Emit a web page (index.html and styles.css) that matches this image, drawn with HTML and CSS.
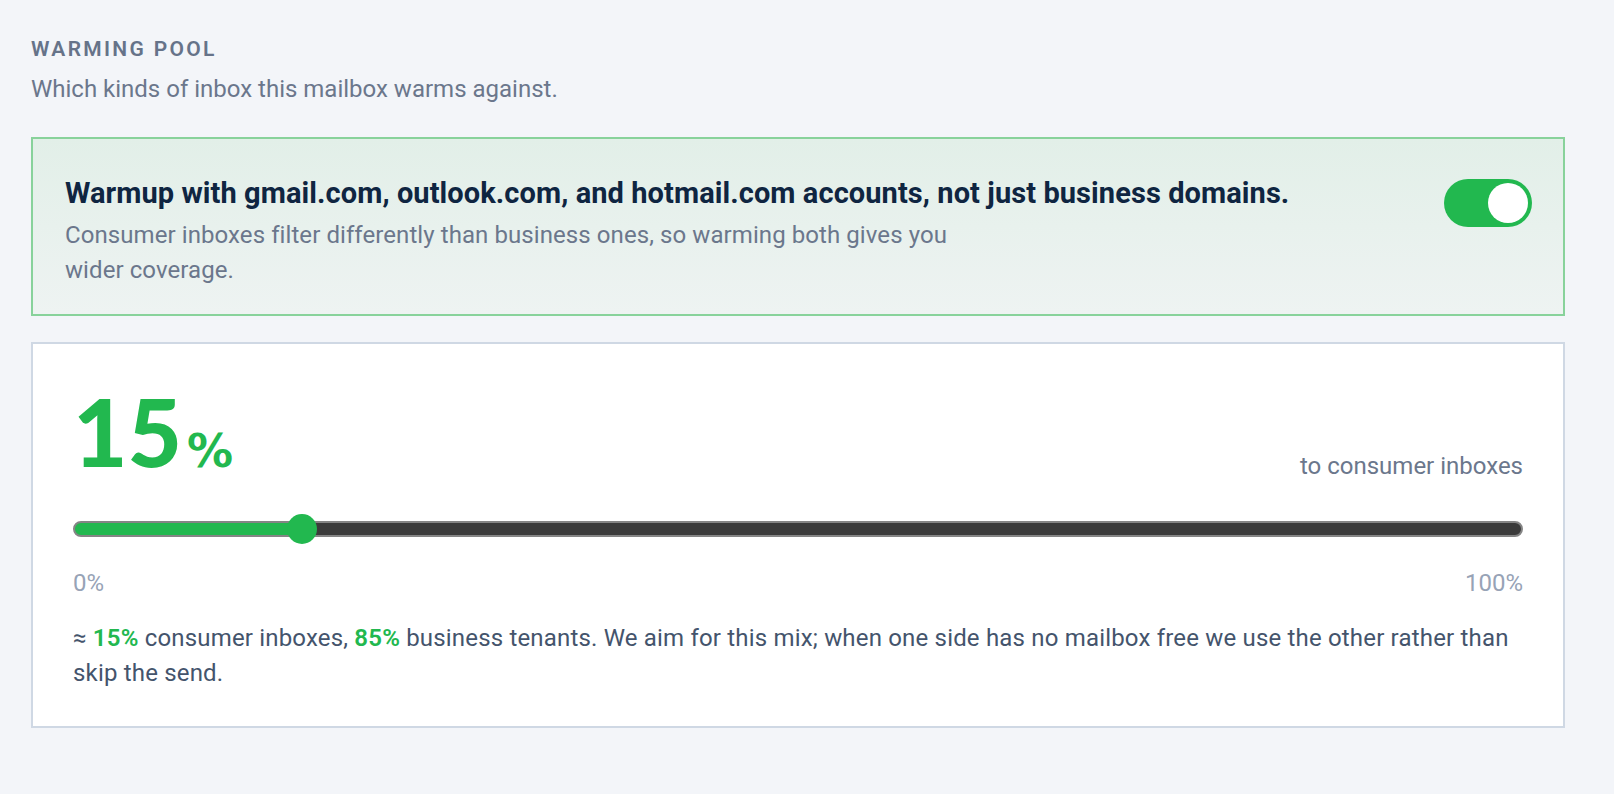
FILE: index.html
```html
<!DOCTYPE html>
<html lang="en">
<head>
    <meta charset="UTF-8">
    <title>Warming pool</title>
    <link rel="stylesheet" href="styles.css">
</head>
<body>
<div class="page">
    <h2 class="sectionLabel">Warming pool</h2>
    <p class="sectionHint">Which kinds of inbox this mailbox warms against.</p>

    <div class="optionBox">
        <div class="optionText">
            <h3 class="optionTitle">Warmup with gmail.com, outlook.com, and hotmail.com accounts, not just business domains.</h3>
            <p class="optionDesc">Consumer inboxes filter differently than business ones, so warming both gives you wider coverage.</p>
        </div>
        <button class="toggle on" role="switch" aria-checked="true"><span class="knob"></span></button>
    </div>

    <div class="mixCard">
        <div class="mixHead">
            <div class="mixValue">15<span class="mixPct">%</span></div>
            <div class="mixCaption">to consumer inboxes</div>
        </div>
        <input class="mixRange" type="range" min="0" max="100" value="15" style="--val: 0.15">
        <div class="mixScale">
            <span>0%</span>
            <span>100%</span>
        </div>
        <p class="mixNote">&asymp; <b>15%</b> consumer inboxes, <b>85%</b> business tenants. We aim for this mix; when one side has no mailbox free we use the other rather than skip the send.</p>
    </div>
</div>
</body>
</html>
```

FILE: styles.css
```css
*{
    margin: 0;
    padding: 0;
    box-sizing: border-box;
}
body{
    background: #f3f5f9;
    font-family: Roboto, "Noto Sans", sans-serif;
    color: #64748b;
}
.page{
    padding: 37px 49px 40px 31px;
}
.sectionLabel{
    font-size: 21px;
    line-height: 24px;
    font-weight: 600;
    letter-spacing: 0.11em;
    text-transform: uppercase;
    color: #667389;
}
.sectionHint{
    margin-top: 11px;
    font-size: 24px;
    line-height: 35px;
    color: #6b778c;
}

/* consumer toggle box */
.optionBox{
    margin-top: 30px;
    display: flex;
    align-items: flex-start;
    justify-content: space-between;
    padding: 36px 31px 26px 32px;
    border: 2px solid #88d29b;
    background: linear-gradient(#e2efe8, #eef3f2);
}
.optionTitle{
    font-size: 29px;
    line-height: 36px;
    font-weight: 700;
    letter-spacing: 0.08px;
    color: #0f2541;
}
.optionDesc{
    margin-top: 7px;
    max-width: 900px;
    font-size: 24px;
    line-height: 35px;
    letter-spacing: 0.08px;
    color: #6b778c;
}
.toggle{
    flex: none;
    margin-top: 4px;
    width: 88px;
    height: 48px;
    border: none;
    border-radius: 24px;
    background: #cbd5e1;
    padding: 4px;
    display: flex;
    cursor: pointer;
}
.toggle.on{
    background: #22b84f;
    justify-content: flex-end;
}
.knob{
    width: 40px;
    height: 40px;
    border-radius: 50%;
    background: #ffffff;
}

/* mix card */
.mixCard{
    margin-top: 26px;
    padding: 40px 40px 35px 40px;
    border: 2px solid #cfd8e4;
    background: #ffffff;
}
.mixHead{
    display: flex;
    align-items: flex-end;
    justify-content: space-between;
}
.mixValue{
    font-family: Lato, sans-serif;
    font-size: 94px;
    line-height: 1;
    font-weight: 900;
    color: #22b84f;
}
.mixPct{
    font-family: "DejaVu Sans", sans-serif;
    font-size: 46px;
    font-weight: 700;
    margin-left: 5px;
}
.mixCaption{
    font-size: 24px;
    line-height: 24px;
    color: #6b778c;
}
.mixRange{
    -webkit-appearance: none;
    appearance: none;
    display: block;
    width: 100%;
    height: 30px;
    margin-top: 36px;
    background: transparent;
    cursor: pointer;
}
.mixRange::-webkit-slider-runnable-track{
    height: 16px;
    border: 2px solid #858585;
    border-radius: 8px;
    background: linear-gradient(to right, #22b84f calc(15px + var(--val) * (100% - 30px)), #3b3b3b 0);
}
.mixRange::-webkit-slider-thumb{
    -webkit-appearance: none;
    width: 30px;
    height: 30px;
    margin-top: -9px;
    border-radius: 50%;
    background: #22b84f;
}
.mixScale{
    margin-top: 24px;
    display: flex;
    justify-content: space-between;
    font-size: 24px;
    line-height: 31px;
    color: #97a3b6;
}
.mixNote{
    margin-top: 22px;
    font-size: 24px;
    line-height: 35px;
    letter-spacing: 0.18px;
    color: #44546c;
}
.mixNote b{
    font-weight: 600;
    color: #22b84f;
}
```
